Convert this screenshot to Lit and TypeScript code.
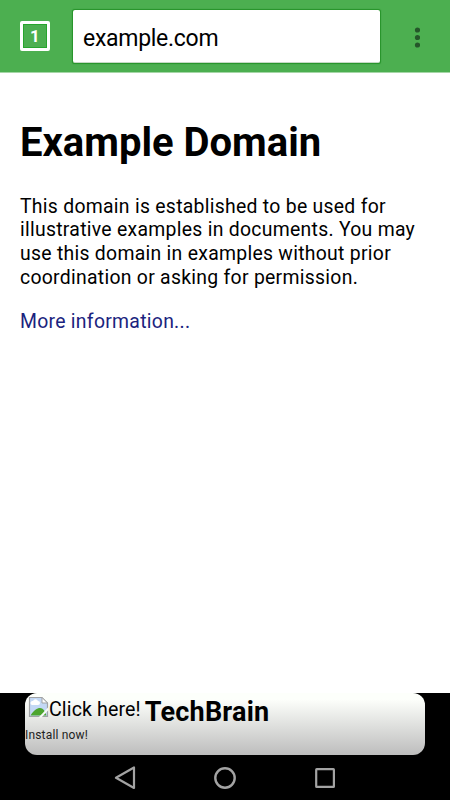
import { LitElement, html, css } from "lit";
import { customElement } from "lit/decorators.js";

@customElement("app-root")
export class AppRoot extends LitElement {
  static styles = css`
    :host { display: flex; flex-direction: column; height: 800px; width: 450px; overflow: hidden; background: #fff; font-family: Roboto, sans-serif; color: #000; }
    * { box-sizing: border-box; }
    svg { display: block; flex: none; }
    .toolbar { height: 72.5px; flex: none; background: #4caf50; border-bottom: 1px solid #a5d6a6; display: flex; align-items: flex-start; padding: 10px 20px 0; }
    .tab { width: 30px; height: 30px; margin-top: 11px; border: 3px solid #fff; border-radius: 2px; color: #fff; font-size: 17px; line-height: 24px; font-weight: 700; text-align: center; box-shadow: inset 0 0 0 1px #27a52d; }
    .url { width: 307px; height: 53px; margin-left: 23px; padding-left: 10px; background: #fff; border-radius: 2px; border-bottom: 1px solid #c6d9c6; box-shadow: 0 0 1px 0.6px #269329; font-size: 23px; line-height: 57px; letter-spacing: -0.28px; }
    .more { margin: 17px 0 0 34px; }
    .page { flex: 1; padding: 46.5px 20px 0; }
    h1 { margin: 0; font-size: 40px; line-height: 47px; font-weight: 700; white-space: nowrap; }
    p { margin: 28.5px 0 0; font-size: 19.4px; line-height: 23.8px; letter-spacing: .28px; white-space: nowrap; }
    .link { margin-top: 20px; color: #1a237e; }
    .bottom { height: 107.5px; flex: none; background: #000; padding: 0 25px; }
    .ad { height: 62.5px; border-radius: 12px; background: linear-gradient(#fdfffb 10%, #bdbdbd); overflow: hidden; }
    .adrow { display: flex; height: 34px; padding: 3.5px 0 0 3px; }
    .broken { margin-top: -0.5px; }
    .alt { font-size: 19.6px; line-height: 27px; white-space: nowrap; letter-spacing: .12px; }
    .name { font-size: 27px; line-height: 32px; font-weight: 700; margin: 0 0 0 4px; letter-spacing: .22px; }
    .install { font-size: 12px; line-height: 16px; color: #222; letter-spacing: .18px; }
    .nav { height: 45px; display: flex; justify-content: center; align-items: center; gap: 76px; }
  `;

  render() {
    return html`
      <div class="toolbar">
        <div class="tab">1</div>
        <div class="url">example.com</div>
        <svg class="more" width="6" height="22" viewBox="0 0 6 22" fill="#25562a"><circle cx="3.5" cy="3" r="2.6"/><circle cx="3.5" cy="10.5" r="2.6"/><circle cx="3.5" cy="18" r="2.6"/></svg>
      </div>
      <div class="page">
        <h1>Example Domain</h1>
        <p>This domain is established to be used for<br>illustrative examples in documents. You may<br>use this domain in examples without prior<br>coordination or asking for permission.</p>
        <p class="link">More information...</p>
      </div>
      <div class="bottom">
        <div class="ad">
          <div class="adrow">
            <svg class="broken" width="21" height="22" viewBox="0 0 21 22">
              <path d="M1.5 1.5H14L19.5 7V20.5H1.5Z" fill="#c3d8f5" stroke="#a1a3a5" stroke-width="1.2"/>
              <path d="M14 1.5V7H19.5Z" fill="#fff" stroke="#a1a3a5"/>
              <path d="M4 9a2 2 0 0 1 1-4 2.7 2.7 0 0 1 5 0 2 2 0 0 1 0 4Z" fill="#fff"/>
              <path d="M2.5 19.5C6 14 9 12 12 12S17 15 18.5 19.5Z" fill="#4ca52f"/>
              <path d="M10.5 21.5L20.5 11V14L13.5 21.5Z" fill="#f7faf6"/>
            </svg>
            <span class="alt">Click here!</span>
            <span class="name">TechBrain</span>
          </div>
          <div class="install">Install now!</div>
        </div>
        <div class="nav">
          <svg width="24" height="24" viewBox="0 0 24 24" fill="none" stroke="#a3a3a3" stroke-width="2.2" stroke-linejoin="round"><path d="M21 1.5V22L3 11.8Z"/></svg>
          <svg width="24" height="24" viewBox="0 0 24 24" fill="none" stroke="#a3a3a3" stroke-width="2.4"><circle cx="12" cy="12" r="9.7"/></svg>
          <svg width="24" height="24" viewBox="0 0 24 24" fill="none" stroke="#a3a3a3" stroke-width="2.2" stroke-linejoin="round"><rect x="3.2" y="3.2" width="17.7" height="17.7" rx=".5"/></svg>
        </div>
      </div>
    `;
  }
}
